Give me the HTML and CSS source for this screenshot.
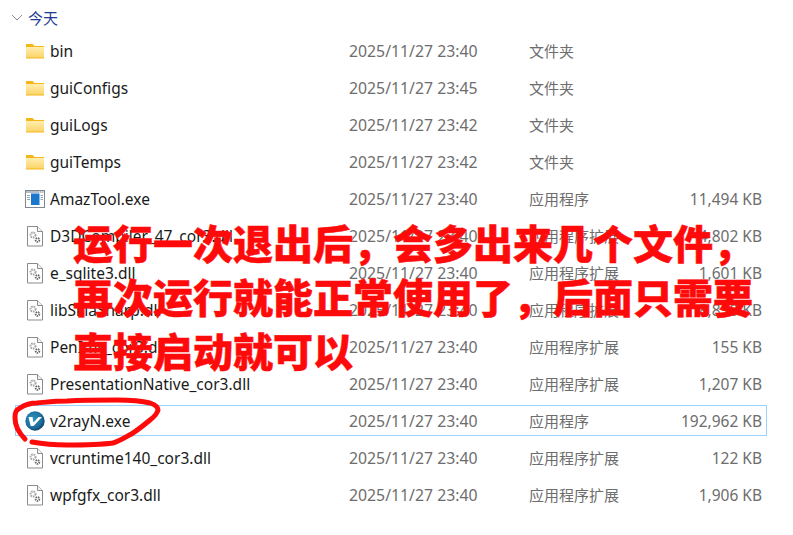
FILE: index.html
```html
<!DOCTYPE html>
<html lang="zh-CN">
<head>
    <meta charset="UTF-8">
    <title>v2rayN</title>
    <link rel="stylesheet" href="styles.css">
</head>
<body>
    <svg width="0" height="0" class="defs">
        <defs>
            <linearGradient id="folderFill" x1="0" y1="0" x2="0" y2="1">
                <stop offset="0" stop-color="#ffeeb0"/>
                <stop offset="1" stop-color="#fcd469"/>
            </linearGradient>
            <symbol id="folder" viewBox="0 0 20 16">
                <path d="M1 1h6.500l2 2h9.500v12.500h-18z" fill="#f5b61a"/>
                <rect x="1" y="4" width="18" height="10.500" fill="url(#folderFill)"/>
            </symbol>
            <symbol id="dll" viewBox="0 0 20 22">
                <path d="M2.500 1.500h10l5 5v14.500h-15z" fill="#fff" stroke="#8b8b8b"/>
                <path d="M12.500 1.500v5h5" fill="#f3f3f3" stroke="#8b8b8b"/>
                <circle cx="8" cy="10" r="2.500" fill="none" stroke="#a8a8a8" stroke-width="2" stroke-dasharray="1.600 .8"/>
                <circle cx="12.500" cy="15" r="1.900" fill="none" stroke="#666" stroke-width="1.800" stroke-dasharray="1.400 .7"/>
            </symbol>
            <symbol id="exe" viewBox="0 0 20 20">
                <rect x=".5" y="1.500" width="19" height="17" fill="#fff" stroke="#7f8790"/>
                <rect x="1" y="2" width="18" height="2" fill="#b4bbc2"/>
                <path d="M14 3h1M16 3h1M18 3h1" stroke="#fff"/>
                <path d="M2 6.500h3M2 8.500h3M2 10.500h3M15.500 6.500h2.500M15.500 8.500h2.500M15.500 10.500h2.500" stroke="#9aa3ab"/>
                <rect x="6" y="4.500" width="8.500" height="11.500" fill="#1878cc"/>
            </symbol>
            <radialGradient id="v2Fill" cx=".4" cy=".4" r=".65">
                <stop offset="0" stop-color="#2f93c4"/>
                <stop offset=".7" stop-color="#1c6d9a"/>
                <stop offset="1" stop-color="#0e3f5f"/>
            </radialGradient>
            <symbol id="v2ray" viewBox="0 0 20 20">
                <circle cx="10" cy="10" r="9.700" fill="url(#v2Fill)"/>
                <path d="M3.500 6h4l1 5.500 5-5.500h3.500l-8.500 9h-2.800z" fill="#fff"/>
            </symbol>
        </defs>
    </svg>

    <div class="group-head">
        <svg class="chevron" viewBox="0 0 12 7"><path d="M1 1l5 5 5-5" fill="none" stroke="#8c8c8c"/></svg>
        <span class="group-title">今天</span>
    </div>

    <div class="file-list">
        <div class="row">
            <svg class="icon icon-folder"><use href="#folder"/></svg>
            <span class="name">bin</span><span class="date">2025/11/27 23:40</span><span class="type">文件夹</span><span class="size"></span>
        </div>
        <div class="row">
            <svg class="icon icon-folder"><use href="#folder"/></svg>
            <span class="name">guiConfigs</span><span class="date">2025/11/27 23:45</span><span class="type">文件夹</span><span class="size"></span>
        </div>
        <div class="row">
            <svg class="icon icon-folder"><use href="#folder"/></svg>
            <span class="name">guiLogs</span><span class="date">2025/11/27 23:42</span><span class="type">文件夹</span><span class="size"></span>
        </div>
        <div class="row">
            <svg class="icon icon-folder"><use href="#folder"/></svg>
            <span class="name">guiTemps</span><span class="date">2025/11/27 23:42</span><span class="type">文件夹</span><span class="size"></span>
        </div>
        <div class="row">
            <svg class="icon icon-exe"><use href="#exe"/></svg>
            <span class="name">AmazTool.exe</span><span class="date">2025/11/27 23:40</span><span class="type">应用程序</span><span class="size">11,494 KB</span>
        </div>
        <div class="row">
            <svg class="icon icon-dll"><use href="#dll"/></svg>
            <span class="name">D3DCompiler_47_cor3.dll</span><span class="date">2025/11/27 23:40</span><span class="type">应用程序扩展</span><span class="size">4,802 KB</span>
        </div>
        <div class="row">
            <svg class="icon icon-dll"><use href="#dll"/></svg>
            <span class="name">e_sqlite3.dll</span><span class="date">2025/11/27 23:40</span><span class="type">应用程序扩展</span><span class="size">1,601 KB</span>
        </div>
        <div class="row">
            <svg class="icon icon-dll"><use href="#dll"/></svg>
            <span class="name">libSkiaSharp.dll</span><span class="date">2025/11/27 23:40</span><span class="type">应用程序扩展</span><span class="size">8,850 KB</span>
        </div>
        <div class="row">
            <svg class="icon icon-dll"><use href="#dll"/></svg>
            <span class="name">PenImc_cor3.dll</span><span class="date">2025/11/27 23:40</span><span class="type">应用程序扩展</span><span class="size">155 KB</span>
        </div>
        <div class="row">
            <svg class="icon icon-dll"><use href="#dll"/></svg>
            <span class="name">PresentationNative_cor3.dll</span><span class="date">2025/11/27 23:40</span><span class="type">应用程序扩展</span><span class="size">1,207 KB</span>
        </div>
        <div class="row selected">
            <svg class="icon icon-v2ray"><use href="#v2ray"/></svg>
            <span class="name">v2rayN.exe</span><span class="date">2025/11/27 23:40</span><span class="type">应用程序</span><span class="size">192,962 KB</span>
        </div>
        <div class="row">
            <svg class="icon icon-dll"><use href="#dll"/></svg>
            <span class="name">vcruntime140_cor3.dll</span><span class="date">2025/11/27 23:40</span><span class="type">应用程序扩展</span><span class="size">122 KB</span>
        </div>
        <div class="row">
            <svg class="icon icon-dll"><use href="#dll"/></svg>
            <span class="name">wpfgfx_cor3.dll</span><span class="date">2025/11/27 23:40</span><span class="type">应用程序扩展</span><span class="size">1,906 KB</span>
        </div>
    </div>

    <!-- red annotation drawn over the screenshot -->
    <div class="note">
        <div>运行一次退出后，会多出来几个文件，</div>
        <div>再次运行就能正常使用了，后面只需要</div>
        <div>直接启动就可以</div>
    </div>
    <svg class="scribble" width="793" height="535" viewBox="0 0 793 535">
        <path d="M25 439C18 432 15 425 15 418C15 412 16 410 20 408C26 404 30 403 37 403C48 402 55 401 67 401C85 400 100 400 117 400C130 400 142 401 150 403C156 405 158 407 158 410C157 414 154 417 150 420C144 425 139 429 133 433C126 437 120 441 113 443C98 445 82 445 67 445C55 445 43 444 32 442" fill="none" stroke="#ff0a0a" stroke-width="5" stroke-linecap="round"/>
    </svg>
</body>
</html>
```

FILE: styles.css
```css
html, body {
    margin: 0;
    padding: 0;
    background: #fff;
    overflow: hidden;
}
body {
    position: relative;
    width: 793px;
    height: 535px;
    font-family: "Noto Sans", "Noto Sans CJK SC", sans-serif;
    font-size: 15.500px;
}
.defs {
    position: absolute;
}
.group-head {
    display: flex;
    align-items: center;
    gap: 5px;
    height: 20px;
    padding: 7px 0 0 11px;
}
.chevron {
    width: 12px;
    height: 7px;
}
.group-title {
    color: #1f3a93;
    font-family: "Noto Sans CJK SC", sans-serif;
    font-size: 15px;
}
.file-list {
    display: flex;
    flex-direction: column;
    gap: 6px;
    margin-top: 8px;
    padding-left: 15px;
    width: 752px;
}
.row {
    display: grid;
    grid-template-columns: 34px 299px 180px 1fr 88px;
    align-items: center;
    height: 29px;
    border: 1px solid transparent;
}
.row.selected {
    border-color: #99d1ff;
}
.icon {
    margin-left: 9px;
}
.icon-folder {
    width: 20px;
    height: 16px;
}
.icon-dll {
    width: 20px;
    height: 22px;
}
.icon-exe, .icon-v2ray {
    width: 20px;
    height: 20px;
}
.name {
    color: #1a1a1a;
    white-space: nowrap;
}
.date, .type, .size {
    color: #6d6d6d;
    white-space: nowrap;
}
.date {
    font-size: 15.800px;
}
.type {
    font-family: "Noto Sans CJK SC", sans-serif;
    font-size: 15px;
}
.size {
    text-align: right;
    padding-right: 4px;
}
.note {
    position: absolute;
    left: 73px;
    top: 215px;
    color: #ff0a0a;
    font-family: "Noto Sans CJK SC", sans-serif;
    font-size: 40px;
    font-weight: 900;
    line-height: 54px;
    white-space: nowrap;
    -webkit-text-stroke: 0.5px #ff0a0a;
}
.scribble {
    position: absolute;
    left: 0;
    top: 0;
    pointer-events: none;
}
```
